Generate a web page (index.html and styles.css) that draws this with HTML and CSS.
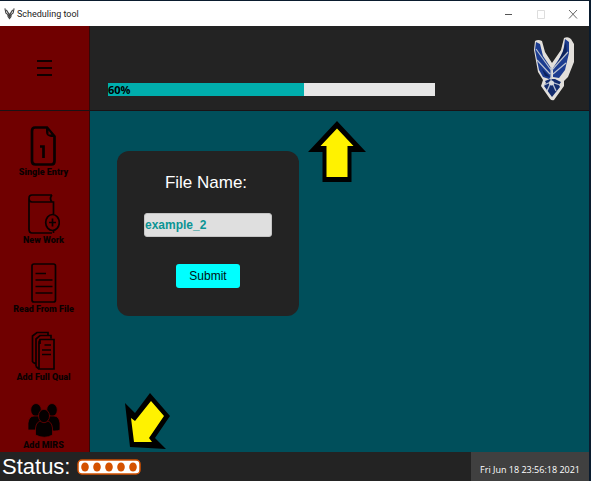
FILE: index.html
```html
<!DOCTYPE html>
<html lang="en">
<head>
<meta charset="utf-8">
<title>Scheduling tool</title>
<link rel="stylesheet" href="styles.css">
</head>
<body>
<div class="window">
  <header class="titlebar">
    <svg class="app-icon" viewBox="0 0 12 13" aria-hidden="true"><path d="M1 1l1 5 2.500 2M11 1l-1 5-2.500 2M2.500 2.500L6 8l3.500-5.500M3.500 8L6 9l2.500-1M4.500 10L6 12l1.500-2z" fill="none" stroke="#444" stroke-width="1.200"/></svg>
    <span class="app-title">Scheduling tool</span>
    <button class="win-btn" aria-label="Minimize"><svg viewBox="0 0 10 10"><path d="M1 5.500h7" stroke="#555"/></svg></button>
    <button class="win-btn" aria-label="Maximize" disabled><svg viewBox="0 0 10 10"><path d="M1.500 1.500h7v8h-7z" fill="none" stroke="#ddd"/></svg></button>
    <button class="win-btn" aria-label="Close"><svg viewBox="0 0 10 10"><path d="M1 1l8 8.500M9 1L1 9.500" stroke="#666"/></svg></button>
  </header>

  <div class="top">
    <button class="menu-btn" aria-label="Menu"><svg viewBox="0 0 15 17"><path d="M0 1h15M0 8h15M0 15h15" stroke="#100" stroke-width="2"/></svg></button>
    <div class="banner">
      <div class="progress" role="progressbar" aria-label="Progress" aria-valuenow="60" aria-valuemin="0" aria-valuemax="100"><div class="progress-fill" style="width:60%">60%</div></div>
      <svg class="emblem" viewBox="0 0 42 66" aria-hidden="true">
        <path d="M2 5q3-2 7 0l3 11 7 11 9-13 3-12q4-2 7 1l3 5v18l-6 15-4 4v5L21 64q-2 1-4-1L8 50l2-6-5-8L1 14z" fill="#e2dfdb"/>
        <path d="M3 6l4 2 3 12 8 12v9l-2 2-6-2-4-7L2 14zM32 3l4 3v11l-4 17-6 8-6-1v-9l10-15z" fill="#1c3c90"/>
        <path d="M12 45l5-2h5l6 3-2 3 1 2-8 10-8-11 2-3z" fill="#142c6e"/>
        <path d="M30 15l3-9 1 12-12 14zM9 33l8 8-5-1z" fill="#0c225c"/>
        <path d="M3 13l15 21M4 24l13 14M35 16L19 34M33 27L20 38M18 31v14" fill="none" stroke="#b9c1d0" stroke-width="1.200"/>
        <path d="M11 49l7-3 9 3M18 46l-4 9M19 46l4 9" fill="none" stroke="#b9c1d0" stroke-width="1.300"/>
        <circle cx="18.500" cy="47" r="2.500" fill="#d8dadd"/>
      </svg>
    </div>
  </div>

  <div class="workspace">
    <nav class="sidebar" aria-label="Actions">
      <button class="nav-btn">
        <svg viewBox="0 0 32 40"><path d="M7 1.500h12l7.500 9V35q0 3.500-3 3.500H7.500Q4 38.500 4 35V5q0-3.500 3-3.500z" fill="none" stroke="#0a0000" stroke-width="2.700"/><path d="M18 1l9 10h-4q-5-1-5-5z" fill="#0a0000"/><path d="M20.500 4.500v4h3z" fill="#700000"/><path d="M12 20.500h3.500V32" fill="none" stroke="#0a0000" stroke-width="2.700"/></svg>
        <span>Single Entry</span>
      </button>
      <button class="nav-btn">
        <svg viewBox="0 0 32 40"><path d="M24 1H4Q1 1 1 4.500V35q0 4 3 4h20M24 1q-3 3.500 0 7M1 4.500Q1 8 4 8h21.500v12M25.500 35v4" fill="none" stroke="#0a0000" stroke-width="1.700"/><ellipse cx="24.500" cy="28.500" rx="6.800" ry="8" fill="#700000" stroke="#0a0000" stroke-width="1.700"/><path d="M21 28.500h7M24.500 24.500v8" stroke="#0a0000" stroke-width="1.700"/></svg>
        <span>New Work</span>
      </button>
      <button class="nav-btn">
        <svg viewBox="0 0 32 40"><rect x="4" y="1" width="23.500" height="38" rx="2" fill="none" stroke="#0a0000" stroke-width="1.700"/><path d="M7.500 10.500h10.500M7.500 17H24.500M7.500 23.500H24.500M7.500 30H24.500" stroke="#0a0000" stroke-width="1.600"/></svg>
        <span>Read From File</span>
      </button>
      <button class="nav-btn">
        <svg viewBox="0 0 32 40"><path d="M12 8.500h14V38H11V11zM8 35.500V8l4-3.500h11v3M4.500 31V5L9 1.500h11v3M11 38l-3-2.500M8 33l-3.500-2M12 8.500V13" fill="none" stroke="#0a0000" stroke-width="1.700"/><path d="M16.500 14H23M14 19h9M14 23.500h9" stroke="#0a0000" stroke-width="1.400"/></svg>
        <span>Add Full Qual</span>
      </button>
      <button class="nav-btn">
        <svg viewBox="0 0 32 40"><g fill="#050000" stroke="#700000" stroke-width=".8"><ellipse cx="8" cy="11" rx="5.300" ry="6.500"/><path d="M0 31v-7q1-7 6-7h4q5 0 6 7v7z"/><ellipse cx="24" cy="11" rx="5.300" ry="6.500"/><path d="M16 31v-7q1-7 6-7h4q5 0 6 7v7q-3 2-16 0z"/><path d="M7.500 36v-7q1-7 6-7h5q5 0 6 7v7q-8 4.500-17 0z"/><ellipse cx="16" cy="17" rx="5.500" ry="6.700"/></g></svg>
        <span>Add MIRS</span>
      </button>
    </nav>
    <main class="content">
      <form class="card">
        <label for="file-name">File Name:</label>
        <input id="file-name" type="text" value="example_2">
        <button type="button" class="submit">Submit</button>
      </form>
      <svg class="arrow arrow-up" viewBox="0 0 58 61" aria-hidden="true"><path d="M29 0l29 31H43.500v30h-29V31H0z" fill="#000"/><path d="M29 7.500L45.500 25h-6v31h-21V25h-6z" fill="#fff200"/></svg>
      <svg class="arrow arrow-down" viewBox="0 0 48 56" aria-hidden="true"><path d="M26 0l20 23-15 22 11 11-36-2L1 10l10 10z" fill="#000"/><path d="M27 8l13 15-15 22 3 4H10L7 25l4 3z" fill="#fff200"/></svg>
    </main>
  </div>

  <footer class="statusbar">
    <span class="status-label">Status:</span>
    <svg class="status-dots" viewBox="0 0 64 16" role="img" aria-label="Working"><rect x="1" y="1" width="62" height="14" rx="4" fill="#fff" stroke="#d45100" stroke-width="1.500"/><g fill="#d45100"><ellipse cx="8" cy="8" rx="3.800" ry="4.500"/><ellipse cx="20" cy="8" rx="3.800" ry="4.500"/><ellipse cx="32" cy="8" rx="3.800" ry="4.500"/><ellipse cx="44" cy="8" rx="3.800" ry="4.500"/><ellipse cx="56" cy="8" rx="3.800" ry="4.500"/></g></svg>
    <time class="clock" datetime="2021-06-18T23:56:18">Fri Jun 18 23:56:18 2021</time>
  </footer>
</div>
</body>
</html>
```
FILE: styles.css
```css
* { box-sizing: border-box; }

body {
  margin: 0;
  background: #0a1b2e;
  font-family: "Liberation Sans", sans-serif;
}

button {
  border: 0;
  padding: 0;
  font: inherit;
  background: none;
}

svg { display: block; }

.window {
  display: flex;
  flex-direction: column;
  min-height: 100vh;
  padding: 1px 2px 0 0;
}

.titlebar {
  display: flex;
  align-items: center;
  height: 25px;
  padding-left: 4px;
  background: #fff;
}

.app-icon { width: 11px; height: 13px; }

.app-title {
  flex: 1;
  margin-left: 2px;
  color: #222;
  font-family: Roboto, sans-serif;
  font-size: 9px;
}

.win-btn {
  display: grid;
  place-items: center;
  width: 32px;
  height: 24px;
}

.win-btn svg { width: 10px; height: 10px; }

.top {
  display: flex;
  height: 85px;
  border-bottom: 1px solid #1a1215;
}

.menu-btn {
  display: grid;
  place-items: center;
  width: 90px;
  background: #700000;
  border-right: 1px solid #330808;
}

.menu-btn svg { width: 15px; height: 17px; }

.banner {
  display: flex;
  flex: 1;
  justify-content: space-between;
  align-items: flex-end;
  padding: 0 14px 8px 18px;
  background: #232323;
}

.progress {
  width: 70%;
  max-width: 328px;
  margin-bottom: 6px;
  background: #e6e6e6;
}

.progress-fill {
  height: 13px;
  background: #00aead;
  color: #000;
  font: bold 11px/14px "Open Sans", sans-serif;
}

.emblem { width: 42px; height: 66px; }

.workspace {
  display: flex;
  flex: 1;
}

.sidebar {
  display: flex;
  flex-direction: column;
  width: 90px;
  background: #700000;
  border-right: 1px solid #330808;
}

.nav-btn {
  display: flex;
  flex: 1;
  flex-direction: column;
  align-items: center;
  justify-content: flex-end;
  padding: 0 2px 1px 0;
  color: #0a0000;
  font: 900 9px/12px Roboto, sans-serif;
}

.nav-btn svg { width: 32px; height: 40px; }

.content {
  position: relative;
  flex: 1;
  padding: 40px 27px;
  background: #004f5b;
}

.card {
  display: flex;
  flex-direction: column;
  align-items: center;
  width: 182px;
  padding: 20px 27px 28px;
  border-radius: 12px;
  background: #232323;
}

.card label {
  padding-right: 4px;
  color: #fff;
  font-size: 17px;
  line-height: 24px;
}

.card input {
  width: 100%;
  height: 24px;
  margin: 18px 0 27px;
  padding: 0;
  border: 1px solid #c4c4c4;
  border-radius: 3px;
  background: #dfdfdf;
  color: #0b9494;
  font: bold 12px "Liberation Sans", sans-serif;
}

.submit {
  width: 64px;
  height: 24px;
  border-radius: 3px;
  background: #00ffff;
  color: #001414;
  font-size: 12px;
}

.arrow { position: absolute; }

.arrow-up { left: 218px; top: 10px; width: 58px; height: 61px; }

.arrow-down { left: 34px; bottom: 3px; width: 48px; height: 56px; }

.statusbar {
  display: flex;
  align-items: center;
  height: 29px;
  padding-left: 2px;
  background: #232323;
}

.status-label {
  color: #fff;
  font-size: 22px;
  line-height: 29px;
}

.status-dots {
  width: 64px;
  height: 16px;
  margin: 0 auto 0 7px;
}

.clock {
  align-self: stretch;
  padding: 0 9px;
  background: #404040;
  color: #fff;
  font: 9px/36px "Open Sans", sans-serif;
}
```
